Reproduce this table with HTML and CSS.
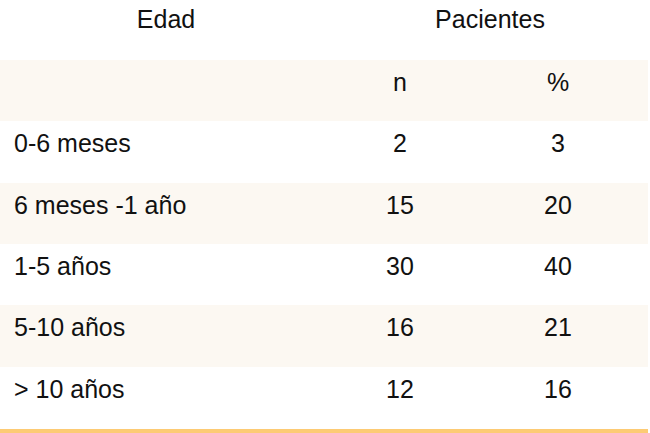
FILE: index.html
```html
<!DOCTYPE html>
<html lang="es">
<head>
<meta charset="utf-8">
<title>Pacientes por edad</title>
<link rel="stylesheet" href="styles.css">
</head>
<body>
<table class="data">
  <colgroup>
    <col class="c1"><col class="c2"><col class="c3">
  </colgroup>
  <thead>
    <tr class="head">
      <th>Edad</th>
      <th colspan="2">Pacientes</th>
    </tr>
  </thead>
  <tbody>
    <tr class="alt">
      <td></td><td class="num">n</td><td class="num">%</td>
    </tr>
    <tr>
      <td>0-6 meses</td><td class="num">2</td><td class="num">3</td>
    </tr>
    <tr class="alt">
      <td>6 meses -1 año</td><td class="num">15</td><td class="num">20</td>
    </tr>
    <tr>
      <td>1-5 años</td><td class="num">30</td><td class="num">40</td>
    </tr>
    <tr class="alt">
      <td>5-10 años</td><td class="num">16</td><td class="num">21</td>
    </tr>
    <tr class="last">
      <td>&gt; 10 años</td><td class="num">12</td><td class="num">16</td>
    </tr>
  </tbody>
</table>
</body>
</html>
```
FILE: styles.css
```css
html, body {
  margin: 0;
  padding: 0;
  background: #ffffff;
}
.data {
  width: 648px;
  border-collapse: collapse;
  table-layout: fixed;
  font-family: "Liberation Sans", Arial, sans-serif;
  font-size: 25px;
  color: #111111;
}
.c1 { width: 332px; }
.c2 { width: 136px; }
.c3 { width: 180px; }
.data th {
  font-weight: normal;
  text-align: center;
  vertical-align: top;
  height: 60px;
  padding: 5px 0 0 0;
  box-sizing: border-box;
}
.data td {
  vertical-align: top;
  height: 61.33px;
  padding: 8px 0 0 14px;
  box-sizing: border-box;
  text-align: left;
}
.data td.num {
  text-align: center;
  padding-left: 0;
}
.alt td {
  background: #fcf8f2;
}
.last td {
  border-bottom: 4px solid #fdcb74;
  height: 64px;
}
```
